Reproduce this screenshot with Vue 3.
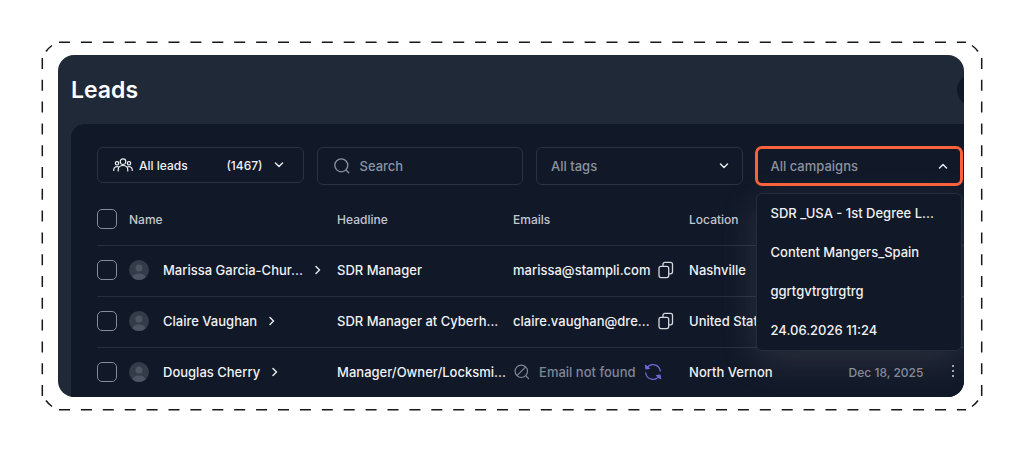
<script setup>
import { ref } from 'vue'

const search = ref('')
const tag = ref('all')
const menuOpen = ref(true)

const campaigns = [
  'SDR _USA - 1st Degree L...',
  'Content Mangers_Spain',
  'ggrtgvtrgtrgtrg',
  '24.06.2026 11:24',
]

const leads = [
  { name: 'Marissa Garcia-Chur...', headline: 'SDR Manager', email: 'marissa@stampli.com', location: 'Nashville', date: '' },
  { name: 'Claire Vaughan', headline: 'SDR Manager at Cyberh...', email: 'claire.vaughan@dre...', location: 'United States', date: '' },
  { name: 'Douglas Cherry', headline: 'Manager/Owner/Locksmi...', email: '', location: 'North Vernon', date: 'Dec 18, 2025' },
]
</script>

<template>
  <main class="page">
    <svg class="outline" viewBox="0 0 1024 452" preserveAspectRatio="none" aria-hidden="true">
      <g fill="none" stroke="#16181c" stroke-width="1.5">
        <path d="M59 42.300H966M59 409.700H966" stroke-dasharray="11 10.900" />
        <path d="M42.300 58V396M981.700 58V396" stroke-dasharray="11 10.800" />
        <path d="M46 51.500Q48.500 48 52 45.500M972 45.500Q975.500 48 978 51.500M46 400.500Q48.500 404 52 406.500M972 406.500Q975.500 404 978 400.500" />
      </g>
    </svg>

    <section class="card">
      <header class="top">
        <h1>Leads</h1>
        <button class="round" type="button" aria-label="Account"></button>
      </header>

      <div class="panel">
        <div class="filters">
          <button class="field leads" type="button">
            <svg width="20" height="14" viewBox="0 0 20 14" fill="none" stroke="currentColor" stroke-width="1.2" stroke-linecap="round" aria-hidden="true">
              <circle cx="10" cy="3.700" r="2.800" />
              <path d="M5.200 13v-1.200a4.800 4.300 0 0 1 9.600 0V13" />
              <circle cx="4" cy="5.300" r="1.700" />
              <circle cx="16" cy="5.300" r="1.700" />
              <path d="M.8 12.500v-1.300A3.200 2.800 0 0 1 5.300 8.800M19.200 12.500v-1.300A3.200 2.800 0 0 0 14.700 8.800" />
            </svg>
            <span class="leads-label">All leads</span>
            <span class="count">(1467)</span>
            <svg class="chev" width="10" height="6" viewBox="0 0 10 6" aria-hidden="true"><path d="M1.500 1l3.500 3.500L8.500 1" /></svg>
          </button>

          <label class="field search">
            <svg width="18" height="18" viewBox="0 0 18 18" fill="none" stroke="#8a93a2" stroke-width="1.300" stroke-linecap="round" aria-hidden="true">
              <circle cx="8.300" cy="8.300" r="6.500" />
              <path d="M13 13l2.800 2.800" />
            </svg>
            <input v-model="search" type="text" placeholder="Search" aria-label="Search" />
          </label>

          <div class="field pick">
            <select v-model="tag" aria-label="Tags">
              <option value="all">All tags</option>
            </select>
            <svg class="chev" width="10" height="6" viewBox="0 0 10 6" aria-hidden="true"><path d="M1.500 1l3.500 3.500L8.500 1" /></svg>
          </div>

          <div class="campaigns">
            <button class="field active" type="button" aria-haspopup="listbox" :aria-expanded="menuOpen" @click="menuOpen = !menuOpen">
              <span>All campaigns</span>
              <svg class="chev" width="10" height="6" viewBox="0 0 10 6" aria-hidden="true"><path d="M1.500 5L5 1.500 8.500 5" /></svg>
            </button>
            <ul v-if="menuOpen" class="menu" role="listbox" aria-label="Campaigns">
              <li v-for="c in campaigns" :key="c" role="option">{{ c }}</li>
            </ul>
          </div>
        </div>

        <table>
          <colgroup>
            <col class="c-check" /><col class="c-name" /><col class="c-text" /><col class="c-text" /><col class="c-loc" /><col class="c-date" /><col />
          </colgroup>
          <thead>
            <tr>
              <th><input type="checkbox" aria-label="Select all leads" /></th>
              <th>Name</th>
              <th>Headline</th>
              <th>Emails</th>
              <th>Location</th>
              <th></th>
              <th></th>
            </tr>
          </thead>
          <tbody>
            <tr v-for="lead in leads" :key="lead.name">
              <td><input type="checkbox" :aria-label="'Select ' + lead.name" /></td>
              <td>
                <a class="name" href="#">
                  <svg class="avatar" width="20" height="20" viewBox="0 0 20 20" aria-hidden="true">
                    <circle cx="10" cy="10" r="10" fill="#343c4a" />
                    <circle cx="10" cy="8" r="3.500" fill="#4c5462" />
                    <path d="M3.300 17.400a7 5.500 0 0 1 13.400 0A10 10 0 0 1 3.300 17.400z" fill="#4c5462" />
                  </svg>
                  <span>{{ lead.name }}</span>
                  <svg class="chev" width="6" height="10" viewBox="0 0 6 10" aria-hidden="true"><path d="M1 1.500L4.500 5 1 8.500" /></svg>
                </a>
              </td>
              <td>{{ lead.headline }}</td>
              <td>
                <div v-if="lead.email" class="email">
                  <span>{{ lead.email }}</span>
                  <button type="button" aria-label="Copy email">
                    <svg width="16" height="18" viewBox="0 0 16 18" fill="none" stroke="#d5d8dd" stroke-width="1.300" stroke-linejoin="round" aria-hidden="true">
                      <rect x="1" y="5.300" width="9.700" height="11.300" rx="2" />
                      <path d="M5 5.300V3.300a2 2 0 0 1 2-2h5.500a2 2 0 0 1 2 2v7.500a2 2 0 0 1-2 2h-1.800" />
                    </svg>
                  </button>
                </div>
                <div v-else class="email missing">
                  <svg width="18" height="18" viewBox="0 0 18 18" fill="none" stroke="currentColor" stroke-width="1.200" stroke-linecap="round" aria-hidden="true">
                    <circle cx="8.300" cy="8.300" r="6.200" />
                    <path d="M4.200 12.400L12.400 4.200M12.900 12.900l2.600 2.600" />
                  </svg>
                  <span>Email not found</span>
                  <button type="button" aria-label="Retry">
                    <svg width="18" height="18" viewBox="0 0 18 18" fill="none" stroke="#7468dc" stroke-width="1.300" stroke-linecap="round" stroke-linejoin="round" aria-hidden="true">
                      <path d="M2.800 5A7.400 7.400 0 0 1 16.300 8M15.200 13A7.400 7.400 0 0 1 1.700 10" />
                      <path d="M1.500 2.500l.6 3.300 3.200-.4zM16.500 15.500l-.6-3.300-3.200.4z" fill="#7468dc" />
                    </svg>
                  </button>
                </div>
              </td>
              <td>{{ lead.location }}</td>
              <td class="date">{{ lead.date }}</td>
              <td>
                <button v-if="lead.date" type="button" aria-label="More actions">
                  <svg width="4" height="14" viewBox="0 0 4 14" fill="#d5d8dd" aria-hidden="true">
                    <circle cx="2" cy="2" r="1" /><circle cx="2" cy="7" r="1" /><circle cx="2" cy="12" r="1" />
                  </svg>
                </button>
              </td>
            </tr>
          </tbody>
        </table>
      </div>
    </section>
  </main>
</template>

<style>
body {
  margin: 0;
  background: #fff;
}
</style>

<style scoped>
* {
  box-sizing: border-box;
}
.page {
  position: relative;
  padding: 55px 60px 55px 58px;
  font-family: Inter, "Liberation Sans", sans-serif;
  font-size: 13px;
  font-weight: 500;
  color: #f0f1f3;
}
.outline {
  position: absolute;
  inset: 0;
  width: 100%;
  height: 100%;
}
.card {
  position: relative;
  overflow: hidden;
  padding-left: 13px;
  border-radius: 16px;
  background: #1f2937;
}
.top {
  display: flex;
  align-items: center;
  justify-content: space-between;
  height: 69px;
}
h1 {
  margin: 0;
  font-size: 23px;
  line-height: 30px;
  font-weight: 600;
  color: #fff;
}
button {
  padding: 0;
  border: 0;
  background: none;
  color: inherit;
  font: inherit;
  display: inline-flex;
  align-items: center;
}
.round {
  width: 32px;
  height: 32px;
  margin-right: -25px;
  border-radius: 50%;
  background: #111827;
}
.panel {
  padding: 23px 0 0 26px;
  border-top-left-radius: 14px;
  background: #111827;
}
.filters {
  display: grid;
  grid-template-columns: repeat(4, minmax(0, 1fr));
  align-items: start;
  gap: 13px;
  padding-right: 2px;
}
.field {
  display: flex;
  align-items: center;
  width: 100%;
  height: 38px;
  border: 1px solid #2b3341;
  border-radius: 6px;
  color: #8b93a0;
}
.leads {
  height: 36px;
  padding: 0 19px 0 15px;
  color: #f0f1f3;
  font-size: 12px;
}
.leads-label {
  margin-left: 6px;
}
.count {
  margin: 0 11px 0 auto;
}
.chev {
  flex: none;
  fill: none;
  stroke: #e4e6ea;
  stroke-width: 1.5;
  stroke-linecap: round;
  stroke-linejoin: round;
}
.search {
  gap: 9px;
  padding: 0 15px;
}
.search input {
  flex: 1;
  min-width: 0;
  padding: 0;
  border: 0;
  outline: 0;
  background: none;
  color: inherit;
  font: inherit;
}
.search input::placeholder {
  color: #8b93a0;
  opacity: 1;
}
.pick {
  position: relative;
}
.pick select {
  appearance: none;
  width: 100%;
  height: 100%;
  padding: 0 32px 0 14px;
  border: 0;
  background: none;
  color: inherit;
  font: inherit;
}
.pick .chev {
  position: absolute;
  right: 13px;
  pointer-events: none;
}
.campaigns {
  position: relative;
}
.active {
  justify-content: space-between;
  padding: 0 13px 0 14px;
  outline: 3px solid #f9623a;
  outline-offset: -2px;
}
.menu {
  position: absolute;
  z-index: 2;
  top: 46px;
  left: 0;
  right: 0;
  margin: 0;
  padding: 0;
  list-style: none;
  border: 1px solid #252d3b;
  border-radius: 6px;
  background: #111827;
  box-shadow: 0 10px 36px rgba(150, 150, 160, 0.2);
}
.menu li {
  padding: 0 14px;
  line-height: 39px;
  white-space: nowrap;
}
table {
  width: 100%;
  margin-top: 9px;
  border-collapse: collapse;
  table-layout: fixed;
}
.c-check {
  width: 32px;
}
.c-name {
  width: 24%;
}
.c-text {
  width: 20.3%;
}
.c-loc {
  width: 18.4%;
}
.c-date {
  width: 11.8%;
}
th,
td {
  height: 51px;
  padding: 0;
  text-align: left;
  font-weight: 500;
  white-space: nowrap;
  vertical-align: middle;
}
td {
  padding-bottom: 2px;
}
th {
  font-size: 12px;
  color: #c3c7cf;
}
tr {
  border-bottom: 1px solid #262e3c;
}
tbody tr:last-child {
  border-bottom: 0;
}
tbody tr:last-child td {
  height: 50px;
  padding-bottom: 0;
}
input[type="checkbox"] {
  appearance: none;
  display: block;
  width: 20px;
  height: 20px;
  margin: 0;
  border: 1px solid #858c99;
  border-radius: 5px;
}
.name {
  display: flex;
  align-items: center;
  color: inherit;
  text-decoration: none;
}
.avatar {
  margin-right: 14px;
}
.name .chev {
  margin-left: 12px;
}
.email {
  display: flex;
  align-items: center;
  gap: 8px;
}
.missing {
  color: #7e8694;
}
.date {
  font-size: 12px;
  color: #858c99;
}
</style>
